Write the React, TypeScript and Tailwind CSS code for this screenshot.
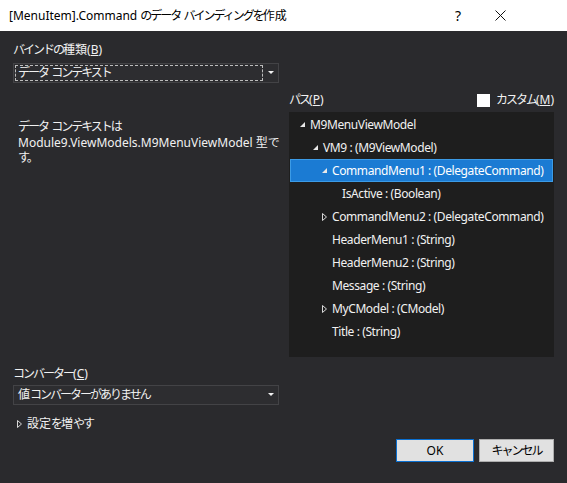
const font = "font-['Noto_Sans','Noto_Sans_CJK_JP',sans-serif]";

// Japanese kana runs: the reference font has narrow proportional kana
function J({ children }: { children: React.ReactNode }) {
  return <span className="tracking-[-2px]">{children}</span>;
}

function Expanded() {
  return (
    <svg width="7" height="7" viewBox="0 0 7 7" className="shrink-0">
      <path d="M6 1 L6 6 L1 6 Z" fill="#e8e8e8" />
    </svg>
  );
}

function Collapsed() {
  return (
    <svg width="7" height="10" viewBox="0 0 7 10" className="shrink-0">
      <path d="M1.5 1.5 L5.5 5 L1.5 8.5 Z" fill="none" stroke="#d8d8d8" strokeWidth="1" />
    </svg>
  );
}

type Row = { label: string; pad: number; icon?: 'open' | 'closed'; selected?: boolean };

const rows: Row[] = [
  { label: 'M9MenuViewModel', pad: 10, icon: 'open' },
  { label: 'VM9 : (M9ViewModel)', pad: 23, icon: 'open' },
  { label: 'CommandMenu1 : (DelegateCommand)', pad: 32, icon: 'open', selected: true },
  { label: 'IsActive : (Boolean)', pad: 53 },
  { label: 'CommandMenu2 : (DelegateCommand)', pad: 32, icon: 'closed' },
  { label: 'HeaderMenu1 : (String)', pad: 43 },
  { label: 'HeaderMenu2 : (String)', pad: 43 },
  { label: 'Message : (String)', pad: 43 },
  { label: 'MyCModel : (CModel)', pad: 32, icon: 'closed' },
  { label: 'Title : (String)', pad: 43 },
];

function Combo({ children, focused }: { children: React.ReactNode; focused?: boolean }) {
  return (
    <div className="flex h-[20px] w-[266px] items-center border border-[#434346] bg-[#2d2d30] pl-[1px] pr-[4px]">
      <div
        className={
          'flex h-[16px] w-[248px] items-center pl-[2px] text-[12px] text-[#f1f1f1] ' +
          (focused ? 'border border-dashed border-[#bdbdbd]' : 'border border-transparent')
        }
      >
        <span className="whitespace-pre">{children}</span>
      </div>
      <div className="flex flex-1 justify-end">
        <svg width="6" height="4" viewBox="0 0 6 4">
          <path d="M0 0 L6 0 L3 3 Z" fill="#f1f1f1" />
        </svg>
      </div>
    </div>
  );
}

export default function App() {
  return (
    <div className={`flex h-[483px] w-[567px] flex-col bg-[#2a2a2d] ${font}`}>
      {/* title bar */}
      <div className="flex h-[31px] items-center bg-white pl-[9px] text-[12px] text-black">
        <span className="flex-1 whitespace-pre">
          [MenuItem].Command <J>のデータ</J> <J>バインディングを</J>作成
        </span>
        <span className="w-[40px] text-center text-[14px]">?</span>
        <svg width="11" height="11" viewBox="0 0 11 11" className="ml-[17px] mr-[61px]">
          <path d="M0.5 0.5 L10.5 10.5 M10.5 0.5 L0.5 10.5" stroke="#111" strokeWidth="1" />
        </svg>
      </div>

      {/* body */}
      <div className="flex px-[13px] pt-[12px] text-[#f1f1f1]">
        <div className="flex w-[266px] flex-col">
          <div className="h-[14px] whitespace-nowrap text-[12px] leading-[14px]">
            <J>バインドの</J>種類(<span className="underline">B</span>)
          </div>
          <div className="mt-[6px]">
            <Combo focused>
              <J>データ</J> <J>コンテキスト</J>
            </Combo>
          </div>
          <div className="mt-[36px] whitespace-pre pl-[5px] text-[12px] leading-[15.5px]">
            <J>データ</J> <J>コンテキストは</J>
            <br />
            Module9.ViewModels.M9MenuViewModel 型<J>で</J>
            <br />
            <J>す。</J>
          </div>
        </div>

        <div className="ml-[10px] flex w-[265px] flex-col pt-[49px]">
          <div className="flex h-[16px] items-center whitespace-nowrap text-[12px]">
            <span className="flex-1">
              <J>パス</J>(<span className="underline">P</span>)
            </span>
            <span className="h-[13px] w-[13px] bg-white" />
            <span className="ml-[6px]">
              <J>カスタム</J>(<span className="underline">M</span>)
            </span>
          </div>
          <div className="mt-[4px] h-[245px] bg-[#1e1e1e] pt-[1px]">
            {rows.map((r) => (
              <div
                key={r.label}
                className={
                  'flex h-[23px] items-center whitespace-nowrap text-[12px] tracking-[-0.4px] ' +
                  (r.selected ? 'mx-[1px] border border-[#3c9be6] bg-[#1b7bd3] text-white' : 'text-[#f1f1f1]')
                }
                style={{ paddingLeft: r.selected ? r.pad - 2 : r.pad }}
              >
                {r.icon && (
                  <span className="mr-[4px] flex w-[7px] items-center">
                    {r.icon === 'open' ? <Expanded /> : <Collapsed />}
                  </span>
                )}
                <span>{r.label}</span>
              </div>
            ))}
          </div>
        </div>
      </div>

      <div className="flex flex-col px-[13px] pt-[10px] text-[#f1f1f1]">
        <div className="h-[14px] whitespace-nowrap text-[12px] leading-[14px]">
          <J>コンバーター</J>(<span className="underline">C</span>)
        </div>
        <div className="mt-[4px]">
          <Combo>
            値<J>コンバーターがありません</J>
          </Combo>
        </div>
        <div className="mt-[11px] flex h-[16px] items-center whitespace-nowrap pl-[3px] text-[12px]">
          <span className="mr-[4px] flex items-center">
            <Collapsed />
          </span>
          設定<J>を</J>増<J>やす</J>
        </div>
        <div className="mt-[7px] flex justify-end gap-[5px]">
          <button className="h-[23px] w-[78px] border border-[#0a6fd0] bg-[#e1e1e1] text-[12px] text-black">OK</button>
          <button className="h-[23px] w-[75px] border border-[#adadad] bg-[#e1e1e1] text-[12px] text-black">
            <J>キャンセル</J>
          </button>
        </div>
      </div>
    </div>
  );
}
